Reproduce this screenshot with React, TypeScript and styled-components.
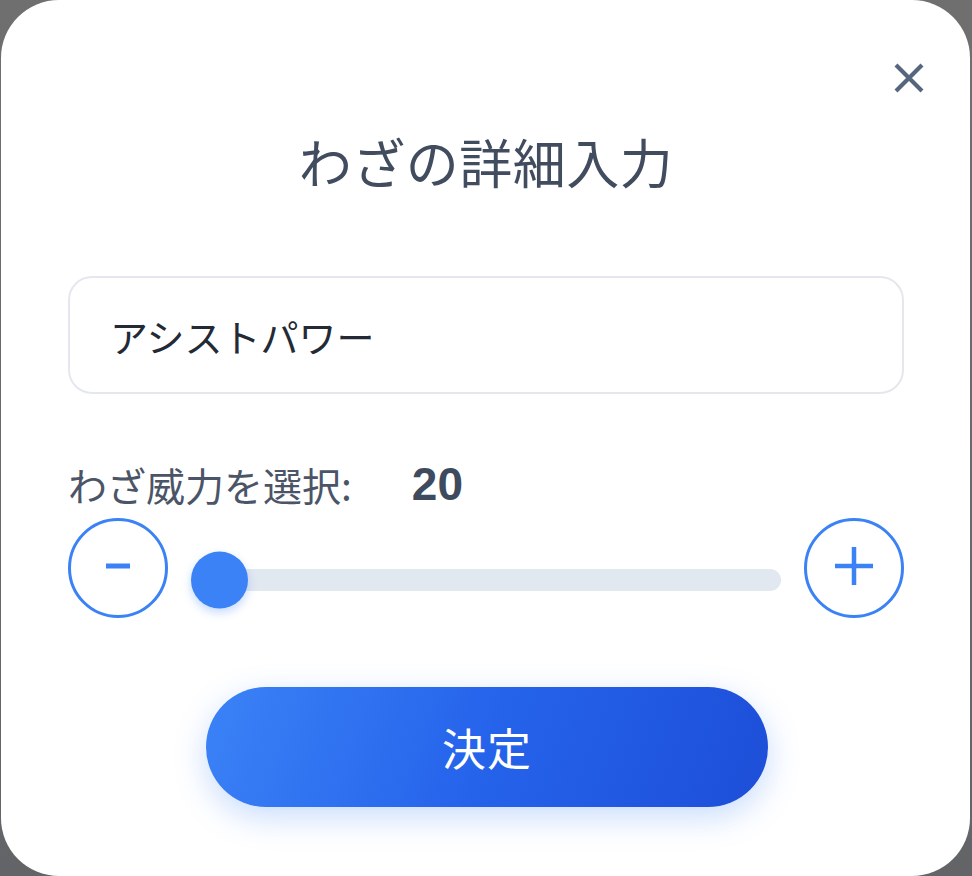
import styled, { createGlobalStyle } from 'styled-components'

const GlobalStyle = createGlobalStyle`
  html, body {
    margin: 0;
    padding: 0;
  }
  body {
    background: linear-gradient(180deg, #6f6f70 0%, #636467 100%);
    font-family: Inter, "Noto Sans CJK JP", sans-serif;
  }
`

const Card = styled.div`
  position: relative;
  box-sizing: border-box;
  width: 969px;
  height: 876px;
  margin-left: 1px;
  padding: 130px 66px 0 67px;
  background: #fff;
  border-radius: 58px;
  display: flex;
  flex-direction: column;
`

const CloseButton = styled.button`
  position: absolute;
  top: 62px;
  right: 45px;
  width: 32px;
  height: 32px;
  padding: 0;
  border: none;
  background: none;
  display: flex;
  align-items: center;
  justify-content: center;
`

const Title = styled.h1`
  margin: 0;
  font-family: "Noto Sans CJK JP", sans-serif;
  font-size: 53px;
  line-height: 62px;
  font-weight: 400;
  color: #414c5f;
  text-align: center;
  letter-spacing: 0.5px;
`

const NameInput = styled.input`
  box-sizing: border-box;
  margin-top: 84px;
  width: 100%;
  height: 118px;
  padding: 0 0 0 40px;
  border: 2px solid #e4e8ee;
  border-radius: 24px;
  background: #fff;
  font-family: "Noto Sans CJK JP", sans-serif;
  font-size: 38px;
  color: #232a36;
  outline: none;
`

const PowerLabel = styled.div`
  margin-top: 66px;
  display: flex;
  align-items: center;
  height: 48px;
  font-family: "Noto Sans CJK JP", sans-serif;
  font-size: 39px;
  color: #4b5567;
`

const PowerValue = styled.span`
  margin-left: 60px;
  font-family: "Liberation Sans", Arial, sans-serif;
  font-weight: 700;
  font-size: 46px;
  color: #3e4a5d;
`

const SliderRow = styled.div`
  margin-top: 10px;
  display: flex;
  align-items: center;
  gap: 23px;
`

const StepButton = styled.button`
  flex: none;
  box-sizing: border-box;
  width: 100px;
  height: 100px;
  padding: 0;
  border: 3px solid #3b82f6;
  border-radius: 50%;
  background: #fff;
  display: flex;
  align-items: center;
  justify-content: center;
`

const Track = styled.div`
  position: relative;
  flex: 1;
  height: 22px;
  margin-top: 23px;
  border-radius: 11px;
  background: #e2e8f0;
`

const Thumb = styled.div`
  position: absolute;
  top: 50%;
  width: 57px;
  height: 57px;
  border-radius: 50%;
  background: #3b82f6;
  box-shadow: 0 4px 10px rgba(59, 130, 246, 0.3);
  transform: translateY(-50%);
`

const SubmitButton = styled.button`
  align-self: center;
  margin-top: 69px;
  margin-left: 2px;
  width: 562px;
  height: 120px;
  border: none;
  border-radius: 60px;
  background: linear-gradient(110deg, #3b82f6 0%, #2563eb 50%, #1d4ed8 100%);
  box-shadow: 0 10px 32px rgba(59, 130, 246, 0.28);
  font-family: "Noto Sans CJK JP", sans-serif;
  font-size: 44px;
  color: #fff;
  letter-spacing: 1px;
`

const MIN = 20
const MAX = 250

export default function App() {
  const power = 20
  const ratio = (power - MIN) / (MAX - MIN)

  return (
    <>
      <GlobalStyle />
      <Card>
        <CloseButton aria-label="閉じる">
          <svg width="32" height="32" viewBox="0 0 32 32">
            <path d="M3 3 L29 29 M29 3 L3 29" stroke="#56667e" strokeWidth="4.2" strokeLinecap="butt" />
          </svg>
        </CloseButton>
        <Title>わざの詳細入力</Title>
        <NameInput readOnly defaultValue="アシストパワー" />
        <PowerLabel>
          わざ威力を選択:
          <PowerValue>{power}</PowerValue>
        </PowerLabel>
        <SliderRow>
          <StepButton aria-label="減らす">
            <svg width="24" height="8" viewBox="0 0 24 8" style={{ marginTop: -4 }}>
              <rect x="0" y="1.5" width="24" height="5" fill="#3b82f6" />
            </svg>
          </StepButton>
          <Track>
            <Thumb style={{ left: `calc(${ratio} * (100% - 57px))` }} />
          </Track>
          <StepButton aria-label="増やす">
            <svg width="40" height="40" viewBox="0 0 40 40" style={{ marginTop: -5 }}>
              <path d="M1 20 H39 M20 1 V39" stroke="#3b82f6" strokeWidth="4.5" />
            </svg>
          </StepButton>
        </SliderRow>
        <SubmitButton>決定</SubmitButton>
      </Card>
    </>
  )
}
